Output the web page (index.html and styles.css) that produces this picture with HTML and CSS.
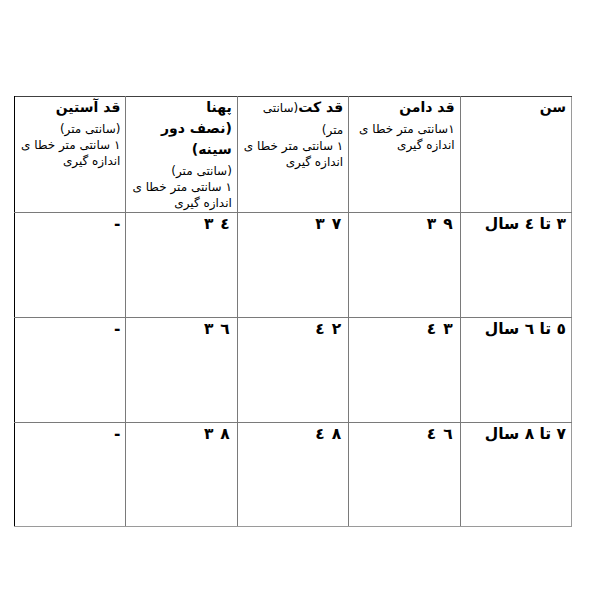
FILE: index.html
```html
<!DOCTYPE html>
<html lang="fa">
<head>
<meta charset="utf-8">
<link rel="stylesheet" href="styles.css">
</head>
<body>
<table class="grid">
  <tr class="head">
    <td class="c c-right">
      <div class="h">سن</div>
    </td>
    <td class="c">
      <div class="h">قد دامن</div>
      <div class="sub">
        <div class="ln">١سانتی متر خطا ی</div>
        <div class="ln">اندازه گیری</div>
      </div>
    </td>
    <td class="c">
      <div class="h">قد کت<span class="reg">(سانتی</span></div>
      <div class="sub">
        <div class="ln">متر)</div>
        <div class="ln">١ سانتی متر خطا ی</div>
        <div class="ln">اندازه گیری</div>
      </div>
    </td>
    <td class="c">
      <div class="h">پهنا</div>
      <div class="h">(نصف دور</div>
      <div class="h">سینه)</div>
      <div class="sub">
        <div class="ln">(سانتی متر)</div>
        <div class="ln">١ سانتی متر خطا ی</div>
        <div class="ln">اندازه گیری</div>
      </div>
    </td>
    <td class="c c-left">
      <div class="h">قد آستین</div>
      <div class="sub">
        <div class="ln">(سانتی متر)</div>
        <div class="ln">١ سانتی متر خطا ی</div>
        <div class="ln">اندازه گیری</div>
      </div>
    </td>
  </tr>
  <tr class="row">
    <td class="c c-right"><div class="v">٣ تا ٤ سال</div></td>
    <td class="c"><div class="v num"><span class="d">٣</span>٩</div></td>
    <td class="c"><div class="v num"><span class="d">٣</span>٧</div></td>
    <td class="c"><div class="v num"><span class="d">٣</span>٤</div></td>
    <td class="c c-left"><div class="v">-</div></td>
  </tr>
  <tr class="row">
    <td class="c c-right"><div class="v">٥ تا ٦ سال</div></td>
    <td class="c"><div class="v num"><span class="d">٤</span>٣</div></td>
    <td class="c"><div class="v num"><span class="d">٤</span>٢</div></td>
    <td class="c"><div class="v num"><span class="d">٣</span>٦</div></td>
    <td class="c c-left"><div class="v">-</div></td>
  </tr>
  <tr class="row row-last">
    <td class="c c-right"><div class="v">٧ تا ٨ سال</div></td>
    <td class="c"><div class="v num"><span class="d">٤</span>٦</div></td>
    <td class="c"><div class="v num"><span class="d">٤</span>٨</div></td>
    <td class="c"><div class="v num"><span class="d">٣</span>٨</div></td>
    <td class="c c-left"><div class="v">-</div></td>
  </tr>
</table>
</body>
</html>
```

FILE: styles.css
```css
html, body {
  margin: 0;
  padding: 0;
  background: #ffffff;
}
body {
  padding: 96px 0 0 14px;
  font-family: "DejaVu Sans", "Liberation Sans", sans-serif;
  color: #000;
}
.grid {
  direction: rtl;
  border-collapse: collapse;
  table-layout: fixed;
  width: 558px;
}
.c {
  direction: rtl;
  width: 111px;
  border: 1px solid #7a7a7a;
  vertical-align: top;
  text-align: right;
  padding: 0 5px 0 2px;
  box-sizing: border-box;
}
.grid tr:first-child .c { border-top-color: #404040; }
.c-left { border-left-color: #000; }
.c-right { border-right-color: #9a9a9a; }
.row-last .c { border-bottom-color: #9a9a9a; }
.head { height: 116px; }
.row { height: 105px; }
.row-last { height: 104px; }
.h {
  direction: rtl;
  font-size: 14px;
  font-weight: bold;
  line-height: 21px;
  text-align: right;
  white-space: nowrap;
}
.reg {
  font-weight: normal;
  font-size: 12px;
}
.sub {
  direction: rtl;
  margin-top: 3px;
  font-size: 12px;
  line-height: 16px;
  text-align: right;
}
.ln {
  white-space: nowrap;
  text-align: right;
}
.v {
  direction: rtl;
  font-size: 15.5px;
  font-weight: bold;
  line-height: 22px;
  text-align: right;
  white-space: nowrap;
}
.num {
  padding-right: 2px;
}
.d {
  margin-right: 7px;
}
```
